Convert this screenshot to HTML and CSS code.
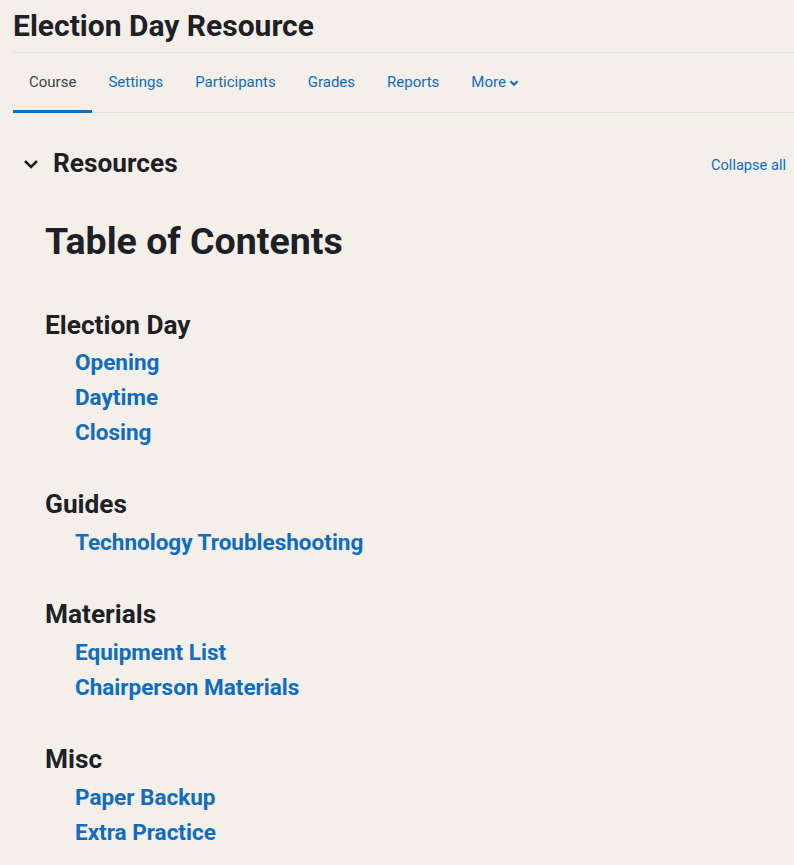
FILE: index.html
```html
<!DOCTYPE html>
<html>
<head>
<meta charset="utf-8">
<link rel="stylesheet" href="styles.css">
</head>
<body>
<div class="page">
  <h1 class="page-title">Election Day Resource</h1>
  <nav class="tabs">
    <a class="tab active" href="#">Course</a>
    <a class="tab" href="#">Settings</a>
    <a class="tab" href="#">Participants</a>
    <a class="tab" href="#">Grades</a>
    <a class="tab" href="#">Reports</a>
    <a class="tab" href="#">More <svg class="caret" viewBox="0 0 10 10" width="10" height="10"><path d="M1.5 3.2 L5 6.7 L8.5 3.2" fill="none" stroke="currentColor" stroke-width="2.1"/></svg></a>
  </nav>
  <div class="section-head">
    <svg class="chev" viewBox="0 0 16 12" width="16" height="12"><path d="M2 3 L8 9 L14 3" fill="none" stroke="#1d2125" stroke-width="2.6"/></svg>
    <h3 class="section-name">Resources</h3>
    <a class="collapse" href="#">Collapse all</a>
  </div>
  <div class="content">
    <h2 class="toc-title">Table of Contents</h2>
    <div class="group">
      <h4 class="group-title">Election Day</h4>
      <a class="item" href="#">Opening</a>
      <a class="item" href="#">Daytime</a>
      <a class="item" href="#">Closing</a>
    </div>
    <div class="group">
      <h4 class="group-title">Guides</h4>
      <a class="item" href="#">Technology Troubleshooting</a>
    </div>
    <div class="group">
      <h4 class="group-title">Materials</h4>
      <a class="item" href="#">Equipment List</a>
      <a class="item" href="#">Chairperson Materials</a>
    </div>
    <div class="group">
      <h4 class="group-title">Misc</h4>
      <a class="item" href="#">Paper Backup</a>
      <a class="item" href="#">Extra Practice</a>
    </div>
  </div>
</div>
</body>
</html>
```
FILE: styles.css
```css
html, body {
  margin: 0;
  padding: 0;
  background: #f4efe9;
  font-family: Roboto, "Liberation Sans", sans-serif;
  color: #1d2125;
}
.page {
  padding: 0 0 0 13px;
}
.page-title {
  margin: 0;
  padding-top: 8px;
  height: 53px;
  box-sizing: border-box;
  font-size: 30px;
  font-weight: 700;
  line-height: 36px;
  border-bottom: 1px solid #dde1e6;
}
.tabs {
  display: flex;
  height: 60px;
  box-sizing: border-box;
  border-bottom: 1px solid #dde1e6;
}
.tab {
  display: flex;
  align-items: center;
  padding: 0 16px;
  font-size: 15px;
  color: #0f6cbf;
  text-decoration: none;
  border-bottom: 3px solid transparent;
  margin-bottom: -1px;
}
.tab.active {
  color: #3d4349;
  border-bottom-color: #0f6cbf;
}
.caret {
  margin-left: 3px;
  margin-top: 2px;
}
.section-head {
  display: flex;
  align-items: center;
  height: 30px;
  margin-top: 35px;
  padding-left: 10px;
}
.chev {
  margin-right: 14px;
  margin-top: 2px;
}
.section-name {
  margin: 0;
  font-size: 26.25px;
  font-weight: 700;
  flex: 1;
}
.collapse {
  font-size: 14.6px;
  color: #0f6cbf;
  text-decoration: none;
  margin-right: 8px;
  margin-top: 4px;
}
.content {
  padding-left: 32px;
}
.toc-title {
  margin: 36px 0 0;
  font-size: 37.5px;
  font-weight: 700;
  line-height: 54px;
}
.group {
  display: flex;
  flex-direction: column;
  align-items: flex-start;
  margin-top: 40px;
}
.group + .group {
  margin-top: 37px;
}
.group-title {
  margin: 0;
  font-size: 26.25px;
  font-weight: 700;
  line-height: 34px;
  margin-bottom: 3px;
}
.group + .group .group-title {
  margin-bottom: 4px;
}
.item {
  margin-left: 30px;
  font-size: 22.5px;
  font-weight: 700;
  line-height: 35px;
  color: #0f6cbf;
  text-decoration: none;
}
```
